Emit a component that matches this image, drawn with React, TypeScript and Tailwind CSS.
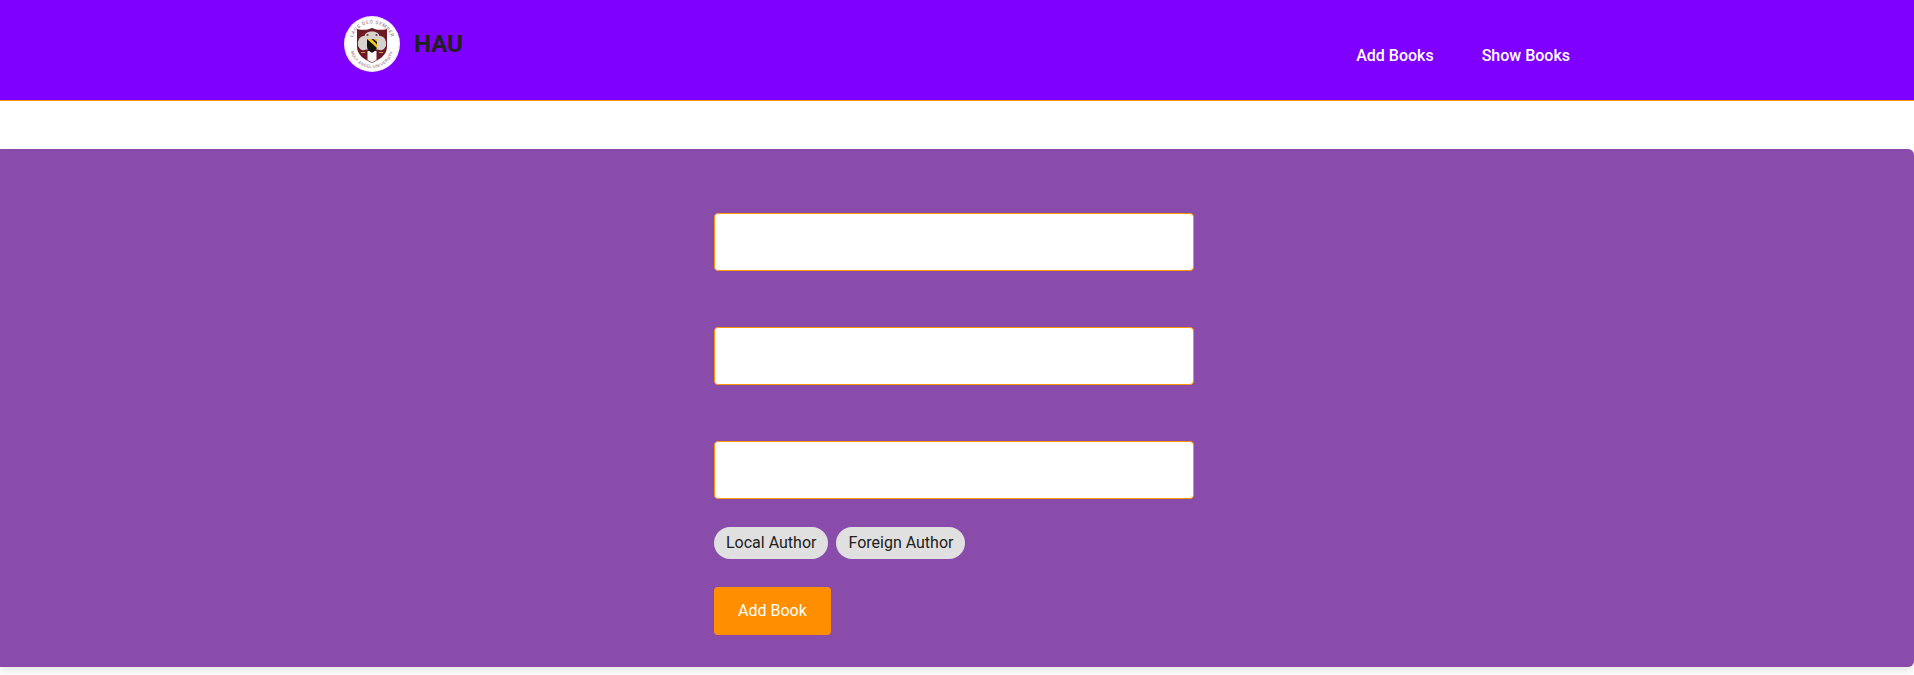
import React from "react";

function Seal() {
  return (
    <svg width="56" height="56" viewBox="0 0 56 56" className="block">
      <defs>
        <path id="sealTop" d="M7.5 28 A20.5 20.5 0 0 1 48.5 28" />
        <path id="sealBottom" d="M6 30 A22 22 0 0 0 50 30" />
      </defs>
      <circle cx="28" cy="28" r="28" fill="#f6eef8" />
      <circle cx="28" cy="28" r="26.5" fill="#ffffff" />
      <text fontSize="4.8" fill="#8a5a62" fontFamily="Roboto, sans-serif" letterSpacing="0.6">
        <textPath href="#sealTop" startOffset="50%" textAnchor="middle">LAUS DEO SEMPER</textPath>
      </text>
      <text fontSize="4.2" fill="#8a5a62" fontFamily="Roboto, sans-serif" letterSpacing="0.4">
        <textPath href="#sealBottom" startOffset="50%" textAnchor="middle">HOLY ANGEL UNIVERSITY</textPath>
      </text>
      <path d="M13 13 C19 14.500 23 14 28 12 C33 14 37 14.500 43 13 L43 31 C43 39 35 44 28 47 C21 44 13 39 13 31 Z" fill="#6d1a24" />
      <path d="M14 30 C13 23 17 19.500 20.500 20 C21 17 24 15.500 28 15.500 C32 15.500 35 17 35.500 20 C39 19.500 43 23 42 30 C40 34 37 35 34 33.500 L22 33.500 C19 35 16 34 14 30 Z" fill="#d6d2cf" />
      <circle cx="23.500" cy="19" r="1.100" fill="#7a3a3f" />
      <circle cx="32.500" cy="19" r="1.100" fill="#7a3a3f" />
      <path d="M23.500 35 L32.500 35 L32.500 44 C31 45 29.500 45.800 28 46.500 C26.500 45.800 25 45 23.500 44 Z" fill="#f7f6f4" />
      <path d="M23 23 L33 23 L33 31 C33 33.500 30.500 35.500 28 36.800 C25.500 35.500 23 33.500 23 31 Z" fill="#14120c" />
      <path d="M23 23 L27.500 23 L33 28.500 L33 32 Z" fill="#efc91f" />
      <path d="M29.500 23 L33 23 L33 26 Z" fill="#efc91f" />
      <path d="M17 36 h4 v1 h-4 Z M35 36 h4 v1 h-4 Z" fill="#c79a3a" />
    </svg>
  );
}

function Field() {
  return (
    <input
      type="text"
      className="block w-full h-[58px] bg-white border border-[#ff9800] rounded-[4px] outline-none"
    />
  );
}

export default function App() {
  return (
    <div className="min-h-[675px] bg-white overflow-hidden font-['Roboto',sans-serif] text-[#212121]">
      <header className="h-[101px] bg-[#8000ff] border-b border-[#ff9800]">
        <div className="w-[1280px] mx-auto pl-[27px] pr-[27px] flex justify-between">
          <div className="flex items-center gap-[14px] pt-[16px]">
            <Seal />
            <span className="text-[24px] font-bold leading-[28px] text-[#212121]">HAU</span>
          </div>
          <nav className="flex gap-[48px] pt-[46px] text-white text-[16px] font-medium leading-[19px]">
            <a>Add Books</a>
            <a>Show Books</a>
          </nav>
        </div>
      </header>

      <main className="mt-[48px] h-[518px] bg-[#894cab] rounded-r-[6px] shadow-[0_4px_10px_rgba(0,0,0,0.1)] pt-[64px]">
        <form className="w-[480px] ml-[714px]">
          <div className="flex flex-col gap-[56px]">
            <Field />
            <Field />
            <Field />
          </div>
          <div className="flex gap-[8px] mt-[28px]">
            <span className="h-[32px] px-[12px] rounded-[16px] bg-[#e0e0e0] text-[16px] leading-[32px] text-[#212121]">Local Author</span>
            <span className="h-[32px] px-[12px] rounded-[16px] bg-[#e0e0e0] text-[16px] leading-[32px] text-[#212121]">Foreign Author</span>
          </div>
          <button
            type="button"
            className="block mt-[28px] h-[48px] px-[24px] rounded-[4px] bg-[#ff8f00] text-white text-[16px]"
          >
            Add Book
          </button>
        </form>
      </main>
    </div>
  );
}
